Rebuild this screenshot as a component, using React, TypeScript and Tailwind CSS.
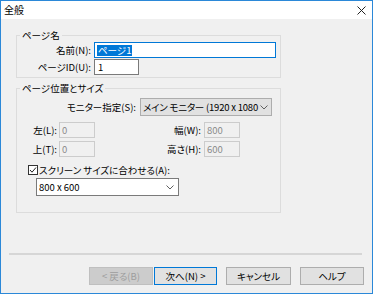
import React from "react";

const Chevron = () => (
  <svg width="8" height="5" viewBox="0 0 8 5" className="shrink-0">
    <polyline points="0.5,0.5 4,4 7.5,0.5" fill="none" stroke="#606060" strokeWidth="1" />
  </svg>
);

export default function App() {
  return (
    <div className="w-[373px] h-[294px] border border-[#2b88d8] bg-[#f0f0f0] flex flex-col text-[9.5px] leading-[14px] text-black font-['Noto_Sans_CJK_JP','Noto_Sans',sans-serif] [font-feature-settings:'palt'] overflow-hidden">
      {/* Title bar */}
      <div className="h-[18px] bg-white flex items-center justify-between pl-[3px] pr-[6px] shrink-0">
        <span className="text-[10px]">全般</span>
        <svg width="9" height="9" viewBox="0 0 9 9">
          <path d="M0.5 0.5 L8.5 8.5 M8.5 0.5 L0.5 8.5" stroke="#222" strokeWidth="1" />
        </svg>
      </div>

      {/* Group 1 */}
      <fieldset className="ml-[15px] mt-[9px] w-[265px] min-w-0 border border-[#dcdcdc] px-0 pt-0 pb-[2px]">
        <legend className="ml-[3px] px-[2px] leading-[14px]">ページ名</legend>
        <div className="flex items-center h-[16px]">
          <div className="w-[74px] text-right">名前(N):</div>
          <div className="ml-[3px] w-[182px] h-[16px] border border-[#0078d7] bg-white flex items-center pl-[2px]">
            <span className="bg-[#0078d7] text-white px-[1px] leading-[11px]">ページ1</span>
          </div>
        </div>
        <div className="flex items-center h-[16px] mt-[1px]">
          <div className="w-[74px] text-right">ページID(U):</div>
          <div className="ml-[3px] w-[45px] h-[16px] border border-[#7a7a7a] bg-white flex items-center pl-[3px]">
            1
          </div>
        </div>
      </fieldset>

      {/* Group 2 */}
      <fieldset className="ml-[15px] mt-[3px] w-[265px] min-w-0 border border-[#dcdcdc] px-0 pt-0 pb-[16px]">
        <legend className="ml-[3px] px-[2px] leading-[14px]">ページ位置とサイズ</legend>
        <div className="flex items-center h-[18px] mt-[3px]">
          <div className="w-[119px] text-right">モニター指定(S):</div>
          <div className="ml-[4px] w-[132px] h-[18px] border border-[#adadad] bg-[#e1e1e1] flex items-center justify-between pl-[2px] pr-[3px]">
            <span className="whitespace-nowrap tracking-[-0.2px]">メイン モニター (1920 x 1080</span>
            <Chevron />
          </div>
        </div>
        <div className="flex items-center h-[16px] mt-[6px]">
          <div className="w-[40px] text-right">左(L):</div>
          <div className="ml-[2px] w-[36px] h-[16px] border border-[#cccccc] bg-[#f0f0f0] flex items-center pl-[2px] text-[#8a8a8a]">0</div>
          <div className="w-[106px] text-right">幅(W):</div>
          <div className="ml-[3px] w-[36px] h-[16px] border border-[#cccccc] bg-[#f0f0f0] flex items-center pl-[2px] text-[#8a8a8a]">800</div>
        </div>
        <div className="flex items-center h-[16px] mt-[3px]">
          <div className="w-[40px] text-right">上(T):</div>
          <div className="ml-[2px] w-[36px] h-[16px] border border-[#cccccc] bg-[#f0f0f0] flex items-center pl-[2px] text-[#8a8a8a]">0</div>
          <div className="w-[106px] text-right">高さ(H):</div>
          <div className="ml-[3px] w-[36px] h-[16px] border border-[#cccccc] bg-[#f0f0f0] flex items-center pl-[2px] text-[#8a8a8a]">600</div>
        </div>
        <div className="flex items-center h-[14px] mt-[6px] ml-[11px]">
          <div className="w-[10px] h-[10px] border border-[#333] bg-white flex items-center justify-center">
            <svg width="8" height="8" viewBox="0 0 8 8">
              <polyline points="1,4 3,6.2 7,1.5" fill="none" stroke="#222" strokeWidth="1" />
            </svg>
          </div>
          <span className="ml-[1px] whitespace-nowrap">スクリーン サイズに合わせる(A):</span>
        </div>
        <div className="ml-[19px] mt-[1px] w-[143px] h-[18px] border border-[#7a7a7a] bg-white flex items-center justify-between pl-[2px] pr-[4px]">
          <span>800 x 600</span>
          <Chevron />
        </div>
      </fieldset>

      {/* Separator */}
      <div className="ml-[8px] mt-[40px] w-[353px] h-[2px] bg-[#d6d6d6] shrink-0" />

      {/* Buttons */}
      <div className="flex mt-[12px] ml-[88px] shrink-0">
        <div className="w-[64px] h-[18px] border border-[#bfbfbf] bg-[#cccccc] text-[#9d9d9d] flex items-center justify-center">&lt; 戻る(B)</div>
        <div className="ml-[1px] w-[63px] h-[18px] border border-[#0078d7] bg-[#e1e1e1] flex items-center justify-center">次へ(N) &gt;</div>
        <div className="ml-[9px] w-[65px] h-[18px] border border-[#adadad] bg-[#e1e1e1] flex items-center justify-center">キャンセル</div>
        <div className="ml-[9px] w-[64px] h-[18px] border border-[#adadad] bg-[#e1e1e1] flex items-center justify-center">ヘルプ</div>
      </div>
    </div>
  );
}
